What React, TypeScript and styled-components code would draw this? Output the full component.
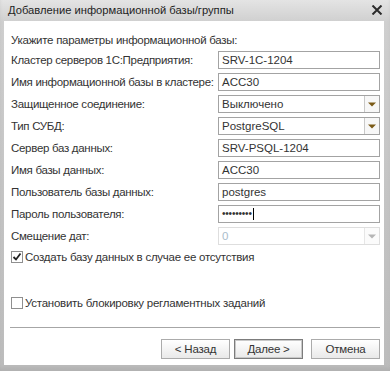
import React from "react";
import styled, { createGlobalStyle } from "styled-components";

const Global = createGlobalStyle`
  html, body { margin: 0; padding: 0; background: #ffffff; }
  body { font-family: "Liberation Sans", Arial, sans-serif; }
  * { box-sizing: border-box; }
`;

const Window = styled.div`
  width: 390px;
  height: 371px;
  display: flex;
  flex-direction: column;
  padding: 0 6px 6px 4px;
  background: linear-gradient(180deg, #e4e4e4 0px, #cfcfcf 22px, #c4c4c4 200px, #bcbcbc 100%);
  box-shadow: inset 0 -5px 4px -2px #b0b0b0;
`;

const TitleBar = styled.div`
  height: 22px;
  display: flex;
  align-items: center;
  justify-content: space-between;
  padding: 0 1px 1px 4px;
`;

const Title = styled.span`
  font-size: 11.2px;
  color: #1e1e1e;
`;

const Close = styled.svg`
  width: 12px;
  height: 10px;
`;

const Content = styled.div`
  flex: 1;
  background: #ffffff;
  display: flex;
  flex-direction: column;
  padding: 11px 3px 6px 6px;
  color: #333333;
  font-size: 11.5px;
`;

const Heading = styled.div`
  font-size: 11.5px;
  letter-spacing: -0.27px;
  line-height: 16px;
  margin-bottom: 3px;
  padding-left: 1px;
`;

const Form = styled.div`
  display: grid;
  grid-template-columns: 208px 162px;
  row-gap: 4px;
  align-items: center;
`;

const Label = styled.label`
  font-size: 11.5px;
  letter-spacing: -0.3px;
  line-height: 18px;
  padding-left: 1px;
  white-space: nowrap;
`;

const Field = styled.div<{ $disabled?: boolean }>`
  height: 18px;
  display: flex;
  align-items: center;
  border: 1px solid ${(p) => (p.$disabled ? "#dedede" : "#a3a3a3")};
  background: #ffffff;
  font-size: 11.5px;
  color: ${(p) => (p.$disabled ? "#a9bccb" : "#333333")};
`;

const FieldText = styled.span`
  flex: 1;
  padding-left: 3px;
  white-space: nowrap;
  overflow: hidden;
`;

const DropButton = styled.span<{ $disabled?: boolean }>`
  width: 15px;
  align-self: stretch;
  display: flex;
  align-items: center;
  justify-content: center;
  border-left: 1px solid ${(p) => (p.$disabled ? "#e6e6e6" : "#c8c8c8")};
  background: ${(p) => (p.$disabled ? "#fbfbfb" : "#f7f7f7")};
`;

const Dots = styled.span`
  padding-left: 3px;
  font-size: 10px;
  letter-spacing: -0.2px;
  color: #333;
  line-height: 1;
`;

const Caret = styled.span`
  display: inline-block;
  width: 1px;
  height: 12px;
  background: #000;
  margin-left: 1px;
`;

const CheckRow = styled.div<{ $top: number }>`
  display: flex;
  align-items: center;
  margin-top: ${(p) => p.$top}px;
  padding-left: 1px;
  height: 12px;
  font-size: 11.5px;
  letter-spacing: -0.25px;
  white-space: nowrap;
`;

const Box = styled.span`
  width: 12px;
  height: 12px;
  flex: none;
  border: 1px solid #8f8f8f;
  background: #fff;
  display: flex;
  align-items: center;
  justify-content: center;
  margin-right: 2px;
`;

const Separator = styled.div`
  height: 1px;
  background: #a6a6a6;
  margin-top: 18px;
  width: 370px;
`;

const Buttons = styled.div`
  margin-top: 11px;
  display: flex;
  justify-content: flex-end;
  width: 370px;
`;

const Button = styled.button<{ $default?: boolean; $gap?: number }>`
  width: 69px;
  height: 20px;
  margin-left: ${(p) => p.$gap ?? 0}px;
  font-family: "Liberation Sans", Arial, sans-serif;
  font-size: 11.5px;
  letter-spacing: -0.2px;
  color: #333333;
  padding: 0;
  background: linear-gradient(180deg, #ffffff 0%, #f4f4f4 50%, #e9e9e9 100%);
  border: 1px solid ${(p) => (p.$default ? "#7c7c7c" : "#ababab")};
  box-shadow: ${(p) => (p.$default ? "inset 0 0 0 1px #c9c9c9" : "none")};
`;

const Arrow = ({ disabled }: { disabled?: boolean }) => (
  <svg width="8" height="5" viewBox="0 0 8 5">
    <path d="M0 0.5 H8 L4 4.5 Z" fill={disabled ? "#b5b5b5" : "#7a5a16"} />
  </svg>
);

const Check = () => (
  <svg width="10" height="10" viewBox="0 0 10 10">
    <path d="M1.5 5 L4 7.5 L8.5 1.5" stroke="#222" strokeWidth="1.8" fill="none" />
  </svg>
);

type Row =
  | { label: string; kind: "text"; value: string }
  | { label: string; kind: "select"; value: string; disabled?: boolean }
  | { label: string; kind: "password" };

const rows: Row[] = [
  { label: "Кластер серверов 1С:Предприятия:", kind: "text", value: "SRV-1C-1204" },
  { label: "Имя информационной базы в кластере:", kind: "text", value: "ACC30" },
  { label: "Защищенное соединение:", kind: "select", value: "Выключено" },
  { label: "Тип СУБД:", kind: "select", value: "PostgreSQL" },
  { label: "Сервер баз данных:", kind: "text", value: "SRV-PSQL-1204" },
  { label: "Имя базы данных:", kind: "text", value: "ACC30" },
  { label: "Пользователь базы данных:", kind: "text", value: "postgres" },
  { label: "Пароль пользователя:", kind: "password" },
  { label: "Смещение дат:", kind: "select", value: "0", disabled: true },
];

export default function App() {
  return (
    <>
      <Global />
      <Window>
        <TitleBar>
          <Title>Добавление информационной базы/группы</Title>
          <Close viewBox="0 0 12 10">
            <path d="M1.5 0.5 L10.5 9.5 M10.5 0.5 L1.5 9.5" stroke="#2b2b2b" strokeWidth="2" />
          </Close>
        </TitleBar>
        <Content>
          <Heading>Укажите параметры информационной базы:</Heading>
          <Form>
            {rows.map((r) => (
              <React.Fragment key={r.label}>
                <Label>{r.label}</Label>
                {r.kind === "text" && (
                  <Field>
                    <FieldText>{r.value}</FieldText>
                  </Field>
                )}
                {r.kind === "select" && (
                  <Field $disabled={r.disabled}>
                    <FieldText>{r.value}</FieldText>
                    <DropButton $disabled={r.disabled}>
                      <Arrow disabled={r.disabled} />
                    </DropButton>
                  </Field>
                )}
                {r.kind === "password" && (
                  <Field>
                    <Dots>•••••••••</Dots>
                    <Caret />
                  </Field>
                )}
              </React.Fragment>
            ))}
          </Form>
          <CheckRow $top={6}>
            <Box>
              <Check />
            </Box>
            Создать базу данных в случае ее отсутствия
          </CheckRow>
          <CheckRow $top={34}>
            <Box />
            Установить блокировку регламентных заданий
          </CheckRow>
          <Separator />
          <Buttons>
            <Button>&lt; Назад</Button>
            <Button $default $gap={4}>Далее &gt;</Button>
            <Button $gap={8}>Отмена</Button>
          </Buttons>
        </Content>
      </Window>
    </>
  );
}
